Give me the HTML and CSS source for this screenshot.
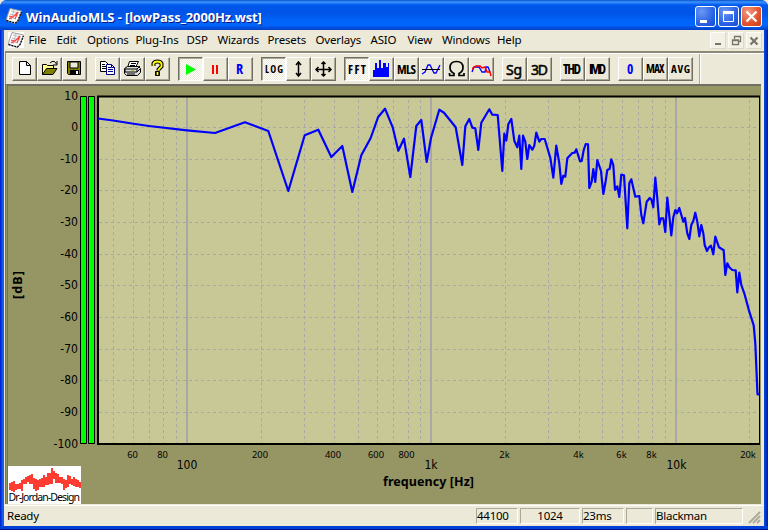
FILE: index.html
```html
<!DOCTYPE html>
<html lang="en">
<head>
<meta charset="utf-8">
<title>WinAudioMLS - [lowPass_2000Hz.wst]</title>
<link rel="stylesheet" href="styles.css">
</head>
<body>
<svg class="defs" width="0" height="0">
  <symbol id="app" viewBox="0 0 16 16">
    <path d="M4 .5L15.500 3L12 13L9 15.500L.5 12.500L1 9Z" fill="#fff" stroke="#999"/>
    <path d="M.5 12.500L9.500 15L12 12.500L15.500 4" fill="none" stroke="#111" stroke-width="1.400" stroke-dasharray="2 1"/>
    <path d="M5 3L13 5M4 6L12 8M3 9L10 11M8 2L5 12" fill="none" stroke="#bbb"/>
    <path d="M3 8L7 9L12 4L9 11M3 11L7 9" fill="none" stroke="#f44" stroke-width="1.200"/>
  </symbol>
</svg>
<div class="window">
  <header class="titlebar">
    <svg class="app-icon" width="16" height="16"><use href="#app"/></svg>
    <h1>WinAudioMLS - [lowPass_2000Hz.wst]</h1>
    <div class="controls">
      <svg class="control" viewBox="0 0 19 19"><path d="M4 13h7v3H4z" fill="#fff"/></svg>
      <svg class="control" viewBox="0 0 19 19"><path d="M4.500 5.500h10v9h-10z" fill="none" stroke="#fff"/><path d="M4 4h11v3H4z" fill="#fff"/></svg>
      <svg class="control close" viewBox="0 0 19 19"><path d="M4.500 4.500l10 10M14.500 4.500l-10 10" stroke="#fff" stroke-width="2.300"/></svg>
    </div>
  </header>
  <div class="body">
    <nav class="menubar">
      <svg class="doc-icon" width="16" height="16"><use href="#app"/></svg>
      <span>File</span><span>Edit</span><span>Options</span><span>Plug-Ins</span><span>DSP</span><span>Wizards</span><span>Presets</span><span>Overlays</span><span>ASIO</span><span>View</span><span>Windows</span><span>Help</span>
      <div class="mdi">
        <svg viewBox="0 0 14 15"><path d="M4 10h6v2H4z" fill="#777468"/></svg>
        <svg viewBox="0 0 14 15"><path d="M5.500 6V3.500h6v5H9M3.500 7.500h6v4h-6zM5 3.500h7M3 7h7" fill="none" stroke="#777468" stroke-width="1.300"/></svg>
        <svg viewBox="0 0 14 15"><path d="M3.500 4.500l7 7M10.500 4.500l-7 7" stroke="#777468" stroke-width="2.200"/></svg>
      </div>
    </nav>
    <div class="toolbar">
      <div class="group">
        <svg class="btn" viewBox="0 0 23 22"><path d="M6.500 3.500h7l4 4v9h-11zM13.500 3.500v4h4" fill="#fff" stroke="#000"/></svg>
        <svg class="btn" viewBox="1 1 23 22"><path d="M5.500 17.500v-10h4l1 1h6v3" fill="#ff8" stroke="#000"/><path d="M5.500 17.500l4-6h10.500l-4 6z" fill="#808000" stroke="#000"/><path d="M13 6l2-1.500h2.500l2 2.500M20 4v4h-4" fill="none" stroke="#000"/></svg>
        <svg class="btn" viewBox="1 1 23 22"><path d="M5.500 4.500h13v13h-12l-1-1z" fill="#808000" stroke="#000"/><path d="M8 5h8v6H8z" fill="#ece9d8" stroke="#000"/><path d="M8 13h9v5H8z" fill="#000"/><path d="M14 14h2v3h-2z" fill="#fff"/></svg>
      </div>
      <div class="group">
        <svg class="btn" viewBox="1 1 23 22"><path d="M5.500 4.500h5l3 3v7h-8z" fill="#fff" stroke="#000"/><path d="M7 7.500h3M7 9.500h5M7 11.500h5" stroke="#000"/><path d="M11.500 7.500h5l3 3v7h-8z" fill="#fff" stroke="#000080"/><path d="M13 10.500h3M13 12.500h5M13 14.500h5M16.500 7.500v3h3" fill="none" stroke="#000080"/></svg>
        <svg class="btn" viewBox="1 1 23 22"><path d="M9.500 4.500h9l-3 6h-8z" fill="#fff" stroke="#000"/><path d="M11 6.500h5M10 8.500h5" stroke="#000"/><path d="M4.500 11.500l3-2h11l2 2v4l-3 3h-11l-2-2z" fill="#ddd" stroke="#000"/><path d="M5 12h12v3H5zM17 12l3-3M17 15l3-3M7 17h8" fill="none" stroke="#000"/><path d="M11 13.500h3" stroke="#cc0"/></svg>
        <svg class="btn" viewBox="1 1 23 22"><path d="M8.500 9V6.500q1-2 4-2t4 2v3l-3 3v1" fill="none" stroke="#000" stroke-width="4"/><path d="M10.500 14.500h4v4h-4z" stroke="#000"/><path d="M8.500 9V6.500q1-2 4-2t4 2v3l-3 3v1M12.500 15v3" fill="none" stroke="#ff0" stroke-width="1.800"/></svg>
      </div>
      <div class="group">
        <svg class="btn down" viewBox="1 1 23 22"><path d="M8 7l10 5.500l-10 5.500z" fill="#0f0"/></svg>
        <svg class="btn" viewBox="1 1 23 22"><path d="M9 8h2v9H9zM13 8h2v9h-2z" fill="#f00"/></svg>
        <svg class="btn" viewBox="1 1 23 22"><text class="blue" x="8" y="17" font-size="14" textLength="9.500">R</text></svg>
      </div>
      <div class="group">
        <svg class="btn down" viewBox="1 1 23 22"><text x="4" y="16" font-size="10" textLength="18">LOG</text></svg>
        <svg class="btn" viewBox="1 1 23 22"><path d="M12.500 5v14M10 8l2.500-3l2.500 3M10 16l2.500 3l2.500-3" fill="none" stroke="#000" stroke-width="1.500"/></svg>
        <svg class="btn" viewBox="1 1 23 22"><path d="M12.500 5v14M5 12.500h15M10.500 7l2-2l2 2M10.500 17l2 2l2-2M7.500 10l-2.500 2.500l2.500 2.500M17.500 10l2.500 2.500l-2.500 2.500" fill="none" stroke="#000" stroke-width="1.500"/></svg>
      </div>
      <div class="group">
        <svg class="btn down" viewBox="1 1 23 22"><text x="4" y="17" font-size="12" textLength="18">FFT</text></svg>
        <svg class="btn" viewBox="1 1 23 22"><path d="M4 20v-7h2V6h2v5h2V3h2v8h2V6h3v4h2V6h1v14z" fill="#00f"/></svg>
        <svg class="btn" viewBox="1 1 23 22"><text x="3" y="17" font-size="12.500" textLength="19">MLS</text></svg>
        <svg class="btn" viewBox="1 1 23 22"><path d="M3 17l3-2l3-7h2l4 8h2l4-8" fill="none" stroke="#00f" stroke-width="1.300"/><path d="M3 12.500h18" stroke="#000"/></svg>
        <svg class="btn" viewBox="1 1 23 22"><path d="M5 18.500h5v-2q-4-2-4-6q0-6 6.500-6t6.500 6q0 4-4 6v2h5v-2.500M5.500 16v2.500" fill="none" stroke="#000" stroke-width="1.700"/></svg>
        <svg class="btn" viewBox="1 1 23 22"><path d="M3 15l2-5h5l3 5h3l1-5h2l2 5" fill="none" stroke="#00f" stroke-width="1.300"/><path d="M4 13v-2l3-2h4l2 2l3-1l2 5l3 0l1 4" fill="none" stroke="#f00" stroke-width="1.500"/></svg>
      </div>
      <div class="group">
        <svg class="btn" viewBox="1 1 23 22"><text class="light" x="4" y="17.500" font-size="14" textLength="16">Sg</text></svg>
        <svg class="btn" viewBox="1 1 23 22"><text class="light" x="4" y="17.500" font-size="14" textLength="17">3D</text></svg>
      </div>
      <div class="group">
        <svg class="btn" viewBox="1 1 23 22"><text x="3" y="17" font-size="13.500" textLength="18">THD</text></svg>
        <svg class="btn" viewBox="1 1 23 22"><text x="4" y="17" font-size="13.500" textLength="17">IMD</text></svg>
      </div>
      <div class="group">
        <svg class="btn" viewBox="1 1 23 22"><text class="blue" x="9" y="17" font-size="13.500" textLength="6.500">0</text></svg>
        <svg class="btn" viewBox="1 1 23 22"><text x="3" y="16" font-size="11.500" textLength="18.500">MAX</text></svg>
        <svg class="btn" viewBox="1 1 23 22"><text x="3" y="16" font-size="11" textLength="19">AVG</text></svg>
      </div>
    </div>
    <main class="client">
      <svg class="chart" width="752" height="418" viewBox="8 86 752 418">
        <g class="meter"><path d="M80.500 96.500h6v347h-6zM88.500 96.500h6v347h-6z"/></g>
        <path class="plot" d="M98 97h661v347H98z"/>
        <path class="grid" d="M99 127.500h660M99 159.500h660M99 190.500h660M99 222.500h660M99 254.500h660M99 285.500h660M99 317.500h660M99 349.500h660M99 380.500h660M99 412.500h660"/>
        <path class="grid" d="M113.500 100v343M133.500 100v343M149.500 100v343M163.500 100v343M176.500 100v343M261.500 100v343M304.500 100v343M334.500 100v343M358.500 100v343M377.500 100v343M393.500 100v343M408.500 100v343M420.500 100v343M505.500 100v343M548.500 100v343M579.500 100v343M602.500 100v343M622.500 100v343M638.500 100v343M652.500 100v343M665.500 100v343M749.500 100v343"/>
        <path class="major" d="M187 97v346M431 97v346M676 97v346"/>
        <path class="frame" d="M97 96.500h663M98 96v348M97 444h663" />
        <path d="M759.500 96v348" stroke="#000"/>
        <polyline class="trace" points="98,118.500 113,120.500 132,123.500 149,126 187,130.300 215,133 245,122.300 268.300,131 288.300,191 304.700,135.300 318.300,129.700 331.300,157 342.300,146 352.300,192 361.300,155.300 370.700,138 378,117.300 385,108.700 392.700,127.300 398.300,150.700 404,138.700 410.300,177 416.300,126 421.300,120 426.700,162 431,138 439.300,109.700 444,112.700 455.700,127.300 462.300,165 465.300,126.300 469.300,119 472.300,127.700 475.300,128.300 478.300,150 481.300,122.700 489.300,109.300 492.300,114.700 497.700,115 502.300,171 504.300,133.700 506.300,140.700 508.300,124.300 511.300,119 514.300,140.700 517.300,147.300 519.300,135.700 521.300,169 523,135.700 525.300,141.700 527.300,159 529.300,145 532.300,149.700 534.300,145.700 536.300,132.700 539.300,141.700 541.300,139 544.700,139 550.300,157.700 553.300,177.700 556.300,145.700 559.300,163.300 561.300,184 563.300,175.700 565.300,176.700 567.300,158.300 572.300,153 574.700,152.700 576.300,149.300 580,161.300 581.700,161 583.700,150 585.700,144 588,144.300 589.300,188 591.700,181.700 593.300,169 595.300,182 597.300,160 601,171 603.300,194 605.300,183.300 607.300,170 609.700,168.700 611.300,159.300 613.300,165 615,190 617.300,186.300 619.300,197 621.300,174.700 624,175.300 627.300,228.300 629.300,183.300 631.300,179.300 635.300,196.700 639.300,196 641.300,215 643.300,223.300 646.700,201.700 649.700,198 651.300,199.300 653.300,207.300 655.300,177.700 657.300,198.300 659.300,224.300 661,218.300 663.300,218.300 665.300,232 667.300,197.700 669.300,216 671.300,235.300 673.300,217.300 675.300,210 677,213.300 679.300,208 683.300,221.700 685,218 687.300,233.300 689.300,239 691.300,225 693.300,221 695.300,212.700 697.300,221.700 699.300,236.300 701.300,225 703.300,233.300 704.700,245 707,251 709,247.300 711,245.700 713.300,254.300 715.300,236.700 719,247.300 723.700,250.300 725.300,275 727.300,263.300 729.300,267.300 732.300,270 735.700,270.300 737.300,292.300 739.300,272.700 741.300,285 744.300,293.300 749.300,311.700 753.700,325.300 755.300,343.300 757.500,394.300 759,394.300"/>
        <g class="ylabels">
          <text x="78" y="100">10</text><text x="78" y="131">0</text><text x="78" y="163">-10</text><text x="78" y="194">-20</text><text x="78" y="226">-30</text><text x="78" y="258">-40</text><text x="78" y="289">-50</text><text x="78" y="321">-60</text><text x="78" y="353">-70</text><text x="78" y="384">-80</text><text x="78" y="416">-90</text><text x="78" y="448">-100</text>
        </g>
        <g class="xminor">
          <text x="132.500" y="458">60</text><text x="162.500" y="458">80</text><text x="260" y="458">200</text><text x="333" y="458">400</text><text x="376" y="458">600</text><text x="406.500" y="458">800</text><text x="504.500" y="458">2k</text><text x="578.500" y="458">4k</text><text x="621.500" y="458">6k</text><text x="651.500" y="458">8k</text><text x="748" y="458">20k</text>
        </g>
        <g class="xmajor"><text x="187" y="469">100</text><text x="431" y="469">1k</text><text x="676.500" y="469">10k</text></g>
        <text class="axis" x="428.500" y="486" textLength="91">frequency [Hz]</text>
        <text class="axis" transform="translate(22 285) rotate(-90)" textLength="28">[dB]</text>
        <path d="M8 466h73v38H8z" fill="#fff"/>
        <path class="logo" d="M10 483v7M12 482v9M14 481v11M16 484v6M18 484v5M20 483v6M22 480v11M24 479v5M26 477v7M28 476v6M30 475v9M32 474v10M34 478v11M36 479v12M38 480v10M40 479v8M42 478v9M44 475v12M46 477v8M48 473v12M50 473v11M52 468v16M54 471v8M56 473v10M58 474v9M60 477v6M62 477v7M64 479v11M66 480v8M68 475v12M70 476v8M72 479v6M74 477v9M76 479v8M78 480v7M80 482v6"/>
        <text class="brand" x="8.500" y="501" textLength="71.500">Dr-Jordan-Design</text>
      </svg>
    </main>
    <footer class="status">
      <span class="ready">Ready</span><span class="pane">44100</span><span class="pane center">1024</span><span class="pane">23ms</span><span class="pane"></span><span class="pane">Blackman</span>
      <svg class="grip" width="14" height="14"><path d="M2 13L13 2M6 13L13 6M10 13L13 10" stroke="#aca899" stroke-width="1.800"/></svg>
    </footer>
  </div>
</div>
</body>
</html>
```
FILE: styles.css
```css
* { box-sizing: border-box; }
body { margin: 0; background: #ece9d8; font: 11.5px "Noto Sans", "Liberation Sans", sans-serif; color: #000; overflow: hidden; }
svg { display: block; flex: none; }
.defs { position: absolute; }
.window { width: 768px; height: 530px; padding: 0 4px 4px; border-radius: 7px 7px 0 0; background: linear-gradient(90deg, #0019cf 0, #0831d9 1px, #166aee 3px, #0855dd 4px, #0855dd 764px, #003bda 765px, #001ea0 768px); display: flex; flex-direction: column; box-shadow: inset 0 -1px #00138c, inset 0 -4px #0040d8; }
.titlebar { height: 30px; flex: none; margin: 0 -4px; padding: 1px 6px 0 6px; border-radius: 7px 7px 0 0; display: flex; align-items: center; background: linear-gradient(#0a52c8 0, #3d95ff 2px, #0058ee 5px, #0053e5 13px, #0063f8 20px, #0066ff 25px, #0055e5 27px, #0040c8 30px); }
.titlebar h1 { margin: 0 0 0 4px; flex: 1; font: bold 13px "Open Sans", "Noto Sans", sans-serif; line-height: 28px; padding-top: 3px; color: #fff; text-shadow: 1px 1px #0a1883; white-space: nowrap; letter-spacing: -0.11px; }
.controls { display: flex; gap: 2px; padding-top: 2px; }
.control { width: 21px; height: 21px; border: 1px solid #fff; border-radius: 3px; background: radial-gradient(circle at 30% 25%, #6b98f2, #2a63e6 60%, #154cd0); }
.close { background: radial-gradient(circle at 30% 25%, #f09a80, #e2522c 60%, #c93c17); }
.body { flex: 1; display: flex; flex-direction: column; min-height: 0; background: #ece9d8; }
.menubar { height: 20px; flex: none; display: grid; grid-template-columns: 24.5px 28px 30.5px 48.5px 51px 31px 50px 48px 55px 37px 34.5px 55px 1fr 54px; align-items: center; line-height: 17px; letter-spacing: -0.15px; white-space: nowrap; }
.menubar span { padding-bottom: 1px; }
.doc-icon { margin-left: 4px; background: #fff; }
.mdi { display: flex; gap: 2px; }
.mdi svg { width: 16px; height: 17px; background: #f3f1e6; border: 1px solid #fcfcf9; border-right-color: #ddd9c8; border-bottom-color: #ddd9c8; }
.toolbar { height: 33px; flex: none; margin: 1px 0 0 1px; padding: 4px 0 0 6px; display: flex; gap: 8px; border-top: 2px solid #8c8978; border-left: 1px solid #8c8978; box-shadow: inset 0 1px #fff; background: linear-gradient(90deg, transparent 693px, #aca899 693px, #aca899 694px, #fff 694px, #fff 695px, transparent 695px); }
.group { display: flex; }
.btn { width: 25px; height: 24px; border: 1px solid; border-color: #fff #716f64 #716f64 #fff; box-shadow: inset -1px -1px #aca899; }
.btn.down { border-color: #716f64 #fff #fff #716f64; box-shadow: inset 1px 1px #aca899; background: repeating-conic-gradient(#fff 0 25%, #ece9d8 0 50%) 0 0 / 2px 2px; }
.btn text { font-family: "DejaVu Sans Condensed", "DejaVu Sans", sans-serif; font-stretch: condensed; font-weight: bold; }
.btn text[textLength] { font-family: "Liberation Sans Narrow", "Open Sans", sans-serif; }
.btn .blue { fill: #00f; }
.btn text.light { font-family: "Noto Sans", sans-serif; font-weight: normal; stroke: #000; stroke-width: .5px; }
.client { height: 420px; flex: none; margin: 0 3px 0 1px; border-top: 2px solid #716f64; border-left: 3px double #716f64; background: #969664; }
.meter { fill: #0f0; stroke: #000; }
.plot { fill: #c8c896; }
.frame { stroke: #000; stroke-width: 2; }
.grid { fill: none; stroke: #a8a8a8; stroke-dasharray: 3 3; shape-rendering: crispEdges; }
.major { stroke: #a8a8a8; stroke-width: 2; }
.trace { fill: none; stroke: #00f; stroke-width: 2.2; stroke-linejoin: round; }
.ylabels { font: 12px "DejaVu Sans Condensed", "DejaVu Sans", sans-serif; text-anchor: end; }
.xminor { font: 9.3px "Noto Sans", sans-serif; text-anchor: middle; }
.xmajor { font: 12px "DejaVu Sans Condensed", "DejaVu Sans", sans-serif; text-anchor: middle; }
.axis { font: bold 12.5px "Noto Sans", sans-serif; text-anchor: middle; }
.brand { font: 10.5px "Noto Sans", sans-serif; }
.logo { stroke: #ff3c32; stroke-width: 2; }
.status { flex: 1; margin: 1px 0 0; border-top: 1px solid #fff; padding: 2px 0 2px; display: grid; grid-template-columns: 470px 42px 60px 42px 27px 88px 1fr; column-gap: 2px; line-height: 14px; letter-spacing: -0.25px; }
.ready { padding-left: 3px; padding-top: 1px; }
.pane { height: 16px; border: 1px solid; border-color: #aca899 #fff #fff #aca899; padding-left: 0; white-space: nowrap; }
.center { text-align: center; }
.grip { align-self: end; justify-self: end; margin-right: 3px; }
```
